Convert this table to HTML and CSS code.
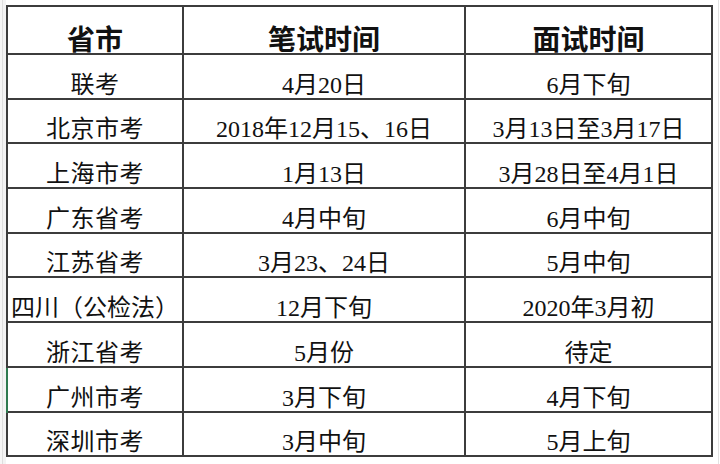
FILE: index.html
```html
<!DOCTYPE html>
<html lang="zh-CN">
<head>
<meta charset="utf-8">
<title>考试时间</title>
<link rel="stylesheet" href="styles.css">
</head>
<body>
<div class="sheet">
  <div class="gutter"></div>
  <div class="area">
    <table class="grid">
      <colgroup>
        <col class="c1"><col class="c2"><col class="c3">
      </colgroup>
      <thead>
        <tr class="head"><th>省市</th><th>笔试时间</th><th>面试时间</th></tr>
      </thead>
      <tbody>
        <tr><td>联考</td><td>4月20日</td><td>6月下旬</td></tr>
        <tr><td>北京市考</td><td>2018年12月15、16日</td><td>3月13日至3月17日</td></tr>
        <tr><td>上海市考</td><td>1月13日</td><td>3月28日至4月1日</td></tr>
        <tr><td>广东省考</td><td>4月中旬</td><td>6月中旬</td></tr>
        <tr><td>江苏省考</td><td>3月23、24日</td><td>5月中旬</td></tr>
        <tr><td class="tight">四川（公检法）</td><td>12月下旬</td><td>2020年3月初</td></tr>
        <tr><td>浙江省考</td><td>5月份</td><td>待定</td></tr>
        <tr><td class="sel">广州市考</td><td>3月下旬</td><td>4月下旬</td></tr>
        <tr><td>深圳市考</td><td>3月中旬</td><td>5月上旬</td></tr>
      </tbody>
    </table>
  </div>
</div>
</body>
</html>
```

FILE: styles.css
```css
html, body {
  margin: 0;
  padding: 0;
  background: #ffffff;
}

.sheet {
  display: flex;
  width: 720px;
  height: 464px;
  overflow: hidden;
  background: #ffffff;
}

.gutter {
  width: 6px;
  flex: 0 0 6px;
  background: linear-gradient(to right, #f6f6f6 0, #f6f6f6 2px, #dedede 2px, #dedede 3px, #f3f3f3 3px, #f3f3f3 6px);
}

.area {
  flex: 1;
  padding-top: 5px;
  background-image: linear-gradient(to right, transparent 712px, #e2e2e2 712px, #e2e2e2 713px, transparent 713px);
}

.grid {
  border-collapse: separate;
  border-spacing: 0;
  table-layout: fixed;
  width: 707px;
  border-top: 2px solid #3c3c3c;
  border-left: 2px solid #3c3c3c;
  font-family: "Liberation Serif", "Noto Sans CJK SC", serif;
  color: #111111;
}

.c1 { width: 176px; }
.c2 { width: 282px; }
.c3 { width: 247px; }

.grid tr { height: 44.7px; }
.grid tr.head { height: 48px; }

.grid th,
.grid td {
  border-right: 2px solid #3c3c3c;
  border-bottom: 2px solid #3c3c3c;
  padding: 0;
  text-align: center;
  vertical-align: bottom;
  white-space: nowrap;
}

.grid th {
  font-family: "Noto Sans CJK SC", sans-serif;
  font-size: 28px;
  font-weight: 700;
  line-height: 30px;
}

.grid td {
  font-size: 24px;
  line-height: 26px;
}

.grid td:first-child {
  letter-spacing: 0.5px;
}

.grid td.tight {
  letter-spacing: 0;
}

.grid td.sel {
  box-shadow: -2px 0 0 #2f7a4f;
}
```
